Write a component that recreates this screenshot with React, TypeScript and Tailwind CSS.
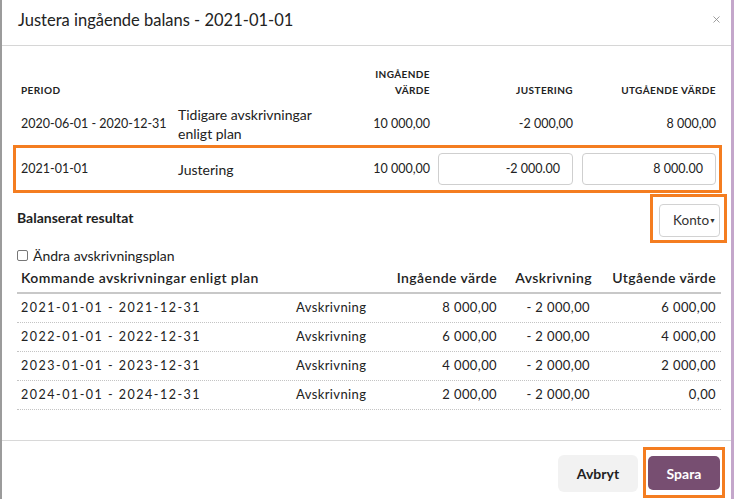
import { X } from "lucide-react";

const font = { fontFamily: "Lato, 'Open Sans', sans-serif" };

const plan = [
  { period: "2021-01-01 - 2021-12-31", inVal: "8 000,00", out: "6 000,00" },
  { period: "2022-01-01 - 2022-12-31", inVal: "6 000,00", out: "4 000,00" },
  { period: "2023-01-01 - 2023-12-31", inVal: "4 000,00", out: "2 000,00" },
  { period: "2024-01-01 - 2024-12-31", inVal: "2 000,00", out: "0,00" },
];

// shared column layout for the top table (period, text, ingående, gap, justering, gap, utgående)
const cols = "grid grid-cols-[157px_182px_70px_8px_135px_9px_134px]";
const planCols = "grid grid-cols-[275px_201px_95px_124px]";

function Header() {
  return (
    <div className="flex h-[46px] items-center justify-between border-b border-[#d6d6d6] pb-[4px] pl-[16px] pr-[9px]">
      <h1 className="text-[16.5px] text-[#222]">Justera ingående balans - 2021-01-01</h1>
      <X className="mb-[2px] h-[11px] w-[11px] text-[#8a8a8a]" strokeWidth={1.8} />
    </div>
  );
}

function NumInput({ value }: { value: string }) {
  return (
    <div className="flex h-[32px] items-center justify-end rounded-[4px] border border-[#cfcfcf] pr-[12px] text-[12.5px] text-[#222]">
      {value}
    </div>
  );
}

function BalanceTable() {
  return (
    <div>
      <div className={`${cols} ml-[19px] items-end pt-[20px] text-[10px] font-bold uppercase tracking-[0.04em] text-[#222]`}>
        <div className="leading-[16px]">Period</div>
        <div />
        <div className="text-right leading-[16px]">
          Ingående
          <br />
          värde
        </div>
        <div />
        <div className="text-right leading-[16px]">Justering</div>
        <div />
        <div className="text-right leading-[16px]">Utgående värde</div>
      </div>
      <div className={`${cols} ml-[19px] mt-[5px] h-[42px] items-center text-[12.5px] text-[#222]`}>
        <div>2020-06-01 - 2020-12-31</div>
        <div className="text-[14px] leading-[19px]">
          Tidigare avskrivningar
          <br />
          enligt plan
        </div>
        <div className="text-right">10 000,00</div>
        <div />
        <div className="text-right">-2 000,00</div>
        <div />
        <div className="text-right">8 000,00</div>
      </div>
      <div className="ml-[11px] w-[709px] border-[3px] border-[#f47d20] py-[5px] pl-[5px] pr-[3px]">
        <div className={`${cols} items-center text-[12.5px] text-[#222]`}>
          <div>2021-01-01</div>
          <div className="text-[14px]">Justering</div>
          <div className="text-right">10 000,00</div>
          <div />
          <NumInput value="-2 000.00" />
          <div />
          <NumInput value="8 000.00" />
        </div>
      </div>
    </div>
  );
}

function PlanTable() {
  return (
    <div className="ml-[15px] mr-[10px] text-[13px] text-[#222]">
      <div className={`${planCols} h-[31px] items-center border-b-2 border-[#c8c8c8] px-[4px] text-[14px] font-semibold tracking-[0.03em]`}>
        <div>Kommande avskrivningar enligt plan</div>
        <div className="text-right">Ingående värde</div>
        <div className="text-right">Avskrivning</div>
        <div className="text-right">Utgående värde</div>
      </div>
      {plan.map((r) => (
        <div
          key={r.period}
          className={`${planCols} h-[29px] items-center border-b border-dotted border-[#c4c4c4] px-[4px] tracking-[0.03em]`}
        >
          <div className="text-[12.5px] tracking-[1.5px]">{r.period}</div>
          <div className="flex justify-between">
            <span>Avskrivning</span>
            <span>{r.inVal}</span>
          </div>
          <div className="pr-[2px] text-right">- 2 000,00</div>
          <div className="text-right">{r.out}</div>
        </div>
      ))}
    </div>
  );
}

export default function App() {
  return (
    <div className="flex h-[499px] w-[734px] bg-white" style={font}>
      <div className="w-[2px] bg-[#9b9b9b]" />
      <div className="flex min-w-0 flex-1 flex-col">
        <Header />
        <BalanceTable />
        <div className="flex items-start justify-between">
          <div className="pl-[15px] pt-[14px] text-[14px] font-bold text-[#222]">Balanserat resultat</div>
          <div className="mr-[4px] mt-[1px] border-[3px] border-[#f47d20] pb-[3px] pl-[6px] pr-[4px] pt-[7px]">
            <div className="flex h-[33px] w-[61px] items-center justify-end rounded-[4px] border border-[#d2d2d2] pr-[3px] text-[13.5px] text-[#333]">
              Konto
              <span className="text-[7px]">▼</span>
            </div>
          </div>
        </div>
        <label className="mt-[4px] flex h-[16px] items-center gap-[5px] pl-[15px] text-[14px] text-[#222]">
          <span className="h-[11px] w-[11px] rounded-[2px] border border-[#777] bg-white" />
          Ändra avskrivningsplan
        </label>
        <PlanTable />
        <div className="mt-auto flex h-[59px] items-start justify-end gap-[5px] border-t border-[#d8d8d8] pr-[6px]">
          <button className="mt-[14px] h-[37px] w-[80px] rounded-[6px] bg-[#f2f2f2] text-[14px] font-bold text-[#222]">
            Avbryt
          </button>
          <div className="mt-[6px] border-[3px] border-[#f47d20] px-[2px] pb-[5px] pt-[6px]">
            <button className="h-[34px] w-[72px] rounded-[5px] bg-[#774e71] text-[14px] font-bold text-white">Spara</button>
          </div>
        </div>
      </div>
      <div className="w-[3px] bg-[#c4a7cb]" />
    </div>
  );
}
